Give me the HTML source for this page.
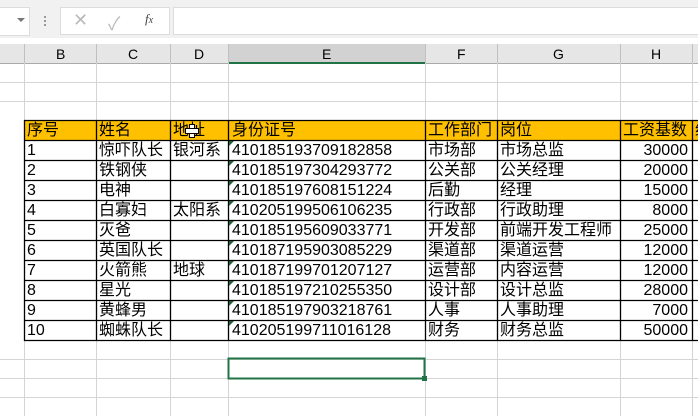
<!DOCTYPE html>
<html><head><meta charset="utf-8"><style>
body{margin:0;width:698px;height:416px;overflow:hidden;background:#fff;position:relative;font-family:"Liberation Sans","Noto Sans CJK SC",sans-serif}
.a{position:absolute}
.c{position:absolute;font-size:16px;line-height:21px;white-space:nowrap;color:#000}
</style></head><body>
<div class="a" style="left:0;top:0;width:698px;height:38px;background:#f1f1f1"></div>
<div class="a" style="left:0;top:7px;width:29px;height:27px;background:#fff;border:1px solid #dcdcdc;border-left:none"></div>
<div class="a" style="left:17px;top:18px;width:0;height:0;border-left:4px solid transparent;border-right:4px solid transparent;border-top:4px solid #777"></div>
<div class="a" style="left:44px;top:16px;width:2px;height:2px;background:#999;box-shadow:0 4px #999,0 8px #999"></div>
<div class="a" style="left:60px;top:7px;width:108px;height:26px;background:#fff;border:1px solid #dcdcdc"></div>
<div class="a" style="left:73px;top:10px;font-size:18px;color:#bbb">✕</div>
<div class="a" style="left:108px;top:10px;font-size:18px;color:#bbb">✓</div>
<div class="a" style="left:145px;top:11px;font-size:13px;font-style:italic;font-family:'Liberation Serif',serif;color:#444">f<span style="font-size:10px">x</span></div>
<div class="a" style="left:173px;top:7px;width:530px;height:26px;background:#fff;border:1px solid #dcdcdc"></div>
<div class="a" style="left:0;top:44px;width:698px;height:19px;background:#e6e6e6;border-bottom:1px solid #aaa"></div>
<div class="a" style="left:229px;top:44px;width:196px;height:18px;background:#d2d2d2;border-bottom:2px solid #217346"></div>
<svg class="a" style="left:0;top:0" width="698" height="416">
<g stroke="#d4d4d4" stroke-width="1">
<line x1="0" y1="82.5" x2="698" y2="82.5"/><line x1="0" y1="101.5" x2="698" y2="101.5"/>
<line x1="0" y1="359.5" x2="698" y2="359.5"/><line x1="0" y1="378.5" x2="698" y2="378.5"/><line x1="0" y1="397.5" x2="698" y2="397.5"/>
<line x1="24.5" y1="63" x2="24.5" y2="416"/><line x1="96.5" y1="63" x2="96.5" y2="416"/><line x1="170.5" y1="63" x2="170.5" y2="416"/><line x1="228.5" y1="63" x2="228.5" y2="416"/><line x1="425.5" y1="63" x2="425.5" y2="416"/><line x1="497.5" y1="63" x2="497.5" y2="416"/><line x1="620.5" y1="63" x2="620.5" y2="416"/><line x1="692.5" y1="63" x2="692.5" y2="416"/>
</g>
<g stroke="#c0c0c0"><line x1="24.5" y1="44" x2="24.5" y2="63"/><line x1="96.5" y1="44" x2="96.5" y2="63"/><line x1="170.5" y1="44" x2="170.5" y2="63"/><line x1="228.5" y1="44" x2="228.5" y2="63"/><line x1="425.5" y1="44" x2="425.5" y2="63"/><line x1="497.5" y1="44" x2="497.5" y2="63"/><line x1="620.5" y1="44" x2="620.5" y2="63"/><line x1="692.5" y1="44" x2="692.5" y2="63"/></g>
<rect x="24" y="120" width="674" height="20" fill="#ffc000"/>
<rect x="24" y="140" width="674" height="200" fill="#fff"/>
<g stroke="#000" stroke-width="1.3">
<line x1="24" y1="120.5" x2="698" y2="120.5"/>
<line x1="24" y1="140.5" x2="698" y2="140.5"/><line x1="24" y1="160.5" x2="698" y2="160.5"/><line x1="24" y1="180.5" x2="698" y2="180.5"/><line x1="24" y1="200.5" x2="698" y2="200.5"/><line x1="24" y1="220.5" x2="698" y2="220.5"/><line x1="24" y1="240.5" x2="698" y2="240.5"/><line x1="24" y1="260.5" x2="698" y2="260.5"/><line x1="24" y1="280.5" x2="698" y2="280.5"/><line x1="24" y1="300.5" x2="698" y2="300.5"/><line x1="24" y1="320.5" x2="698" y2="320.5"/><line x1="24" y1="340.5" x2="698" y2="340.5"/>
<line x1="24.5" y1="120" x2="24.5" y2="341"/><line x1="96.5" y1="120" x2="96.5" y2="341"/><line x1="170.5" y1="120" x2="170.5" y2="341"/><line x1="228.5" y1="120" x2="228.5" y2="341"/><line x1="425.5" y1="120" x2="425.5" y2="341"/><line x1="497.5" y1="120" x2="497.5" y2="341"/><line x1="620.5" y1="120" x2="620.5" y2="341"/><line x1="692.5" y1="120" x2="692.5" y2="341"/>
</g>
<g fill="#1e5e3a"><path d="M229 141h5l-5 5z"/><path d="M229 161h5l-5 5z"/><path d="M229 181h5l-5 5z"/><path d="M229 201h5l-5 5z"/><path d="M229 221h5l-5 5z"/><path d="M229 241h5l-5 5z"/><path d="M229 261h5l-5 5z"/><path d="M229 281h5l-5 5z"/><path d="M229 301h5l-5 5z"/><path d="M229 321h5l-5 5z"/></g>
<rect x="228.5" y="358.5" width="196" height="20" fill="none" stroke="#217346" stroke-width="2"/>
<rect x="422" y="376" width="5" height="5" fill="#217346"/>
</svg>
<div class="c" style="left:56px;top:44px;font-size:14px;line-height:20px">B</div>
<div class="c" style="left:128px;top:44px;font-size:14px;line-height:20px">C</div>
<div class="c" style="left:194px;top:44px;font-size:14px;line-height:20px">D</div>
<div class="c" style="left:322px;top:44px;font-size:14px;line-height:20px">E</div>
<div class="c" style="left:457px;top:44px;font-size:14px;line-height:20px">F</div>
<div class="c" style="left:553px;top:44px;font-size:14px;line-height:20px">G</div>
<div class="c" style="left:651px;top:44px;font-size:14px;line-height:20px">H</div>
<div class="c" style="left:27px;top:120px">序号</div><div class="c" style="left:99px;top:120px">姓名</div><div class="c" style="left:173px;top:120px">地址</div><div class="c" style="left:232px;top:120px">身份证号</div><div class="c" style="left:428px;top:120px">工作部门</div><div class="c" style="left:500px;top:120px">岗位</div><div class="c" style="left:623px;top:120px">工资基数</div><div class="c" style="left:695px;top:120px">绩</div>
<div class="a" style="left:189px;top:124px;width:4px;height:12px;background:#fff;border:1px solid #000"></div><div class="a" style="left:185px;top:128px;width:12px;height:4px;background:#fff;border:1px solid #000"></div><div class="a" style="left:190px;top:129px;width:4px;height:4px;background:#fff"></div>
<div class="c" style="left:27px;top:140px">1</div><div class="c" style="left:99px;top:140px">惊吓队长</div><div class="c" style="left:173px;top:140px">银河系</div><div class="c" style="left:232px;top:140px">410185193709182858</div><div class="c" style="left:428px;top:140px">市场部</div><div class="c" style="left:500px;top:140px">市场总监</div><div class="c" style="right:10px;top:140px">30000</div>
<div class="c" style="left:27px;top:160px">2</div><div class="c" style="left:99px;top:160px">铁钢侠</div><div class="c" style="left:232px;top:160px">410185197304293772</div><div class="c" style="left:428px;top:160px">公关部</div><div class="c" style="left:500px;top:160px">公关经理</div><div class="c" style="right:10px;top:160px">20000</div>
<div class="c" style="left:27px;top:180px">3</div><div class="c" style="left:99px;top:180px">电神</div><div class="c" style="left:232px;top:180px">410185197608151224</div><div class="c" style="left:428px;top:180px">后勤</div><div class="c" style="left:500px;top:180px">经理</div><div class="c" style="right:10px;top:180px">15000</div>
<div class="c" style="left:27px;top:200px">4</div><div class="c" style="left:99px;top:200px">白寡妇</div><div class="c" style="left:173px;top:200px">太阳系</div><div class="c" style="left:232px;top:200px">410205199506106235</div><div class="c" style="left:428px;top:200px">行政部</div><div class="c" style="left:500px;top:200px">行政助理</div><div class="c" style="right:10px;top:200px">8000</div>
<div class="c" style="left:27px;top:220px">5</div><div class="c" style="left:99px;top:220px">灭爸</div><div class="c" style="left:232px;top:220px">410185195609033771</div><div class="c" style="left:428px;top:220px">开发部</div><div class="c" style="left:500px;top:220px">前端开发工程师</div><div class="c" style="right:10px;top:220px">25000</div>
<div class="c" style="left:27px;top:240px">6</div><div class="c" style="left:99px;top:240px">英国队长</div><div class="c" style="left:232px;top:240px">410187195903085229</div><div class="c" style="left:428px;top:240px">渠道部</div><div class="c" style="left:500px;top:240px">渠道运营</div><div class="c" style="right:10px;top:240px">12000</div>
<div class="c" style="left:27px;top:260px">7</div><div class="c" style="left:99px;top:260px">火箭熊</div><div class="c" style="left:173px;top:260px">地球</div><div class="c" style="left:232px;top:260px">410187199701207127</div><div class="c" style="left:428px;top:260px">运营部</div><div class="c" style="left:500px;top:260px">内容运营</div><div class="c" style="right:10px;top:260px">12000</div>
<div class="c" style="left:27px;top:280px">8</div><div class="c" style="left:99px;top:280px">星光</div><div class="c" style="left:232px;top:280px">410185197210255350</div><div class="c" style="left:428px;top:280px">设计部</div><div class="c" style="left:500px;top:280px">设计总监</div><div class="c" style="right:10px;top:280px">28000</div>
<div class="c" style="left:27px;top:300px">9</div><div class="c" style="left:99px;top:300px">黄蜂男</div><div class="c" style="left:232px;top:300px">410185197903218761</div><div class="c" style="left:428px;top:300px">人事</div><div class="c" style="left:500px;top:300px">人事助理</div><div class="c" style="right:10px;top:300px">7000</div>
<div class="c" style="left:27px;top:320px">10</div><div class="c" style="left:99px;top:320px">蜘蛛队长</div><div class="c" style="left:232px;top:320px">410205199711016128</div><div class="c" style="left:428px;top:320px">财务</div><div class="c" style="left:500px;top:320px">财务总监</div><div class="c" style="right:10px;top:320px">50000</div>
</body></html>
